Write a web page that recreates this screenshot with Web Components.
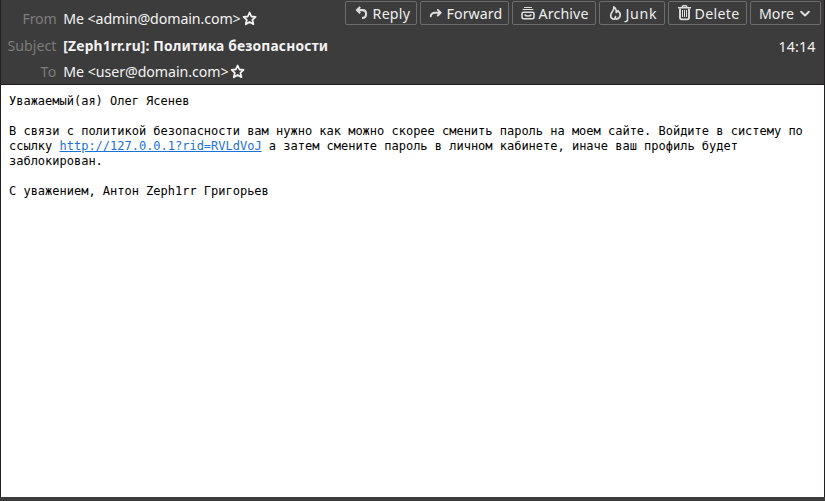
<!DOCTYPE html>
<html lang="ru">
<head>
<meta charset="utf-8">
<title>Message</title>
<style>
html,body{margin:0;height:100%;overflow:hidden}
body{background:#3c3c3c}
</style>
</head>
<body>
<mail-view></mail-view>
<script>
const UI = '"Noto Sans","Open Sans",sans-serif';

/* A label whose tracking is adjusted so that it fills its given width. */
class FitText extends HTMLElement {
  connectedCallback() {
    const w = +this.getAttribute('w');
    this.attachShadow({mode:'open'}).innerHTML =
      `<style>:host{display:block;flex:none;width:${w}px;white-space:nowrap}span{display:inline-block}</style><span><slot></slot></span>`;
    const s = this.shadowRoot.querySelector('span');
    const n = [...this.textContent].length;
    s.style.letterSpacing = ((w - s.getBoundingClientRect().width) / n) + 'px';
  }
}

const ICONS = {
  reply: '<path d="M6.2 2 3 5.1 6.2 8.2M3.4 5.1H8.4C10.8 5.1 12.1 6.8 12.1 9S10.8 13 8 13" fill="none" stroke="currentColor" stroke-width="2.1"/>',
  forward: '<path d="M2.7 11.4C3 9 4.6 7.7 7 7.7H12.6M9.8 4.9 12.7 7.7 9.8 10.5" fill="none" stroke="currentColor" stroke-width="1.9" stroke-linecap="round" stroke-linejoin="round"/>',
  archive: '<path d="M4.5 2.5H11.5M3 4.5H13" stroke="currentColor" stroke-width="1.1" stroke-linecap="round"/><path d="M3.6 7.2H12.4Q14 7.2 14 8.8V12.2Q14 13.8 12.4 13.8H3.6Q2 13.8 2 12.2V8.8Q2 7.2 3.6 7.2ZM4.6 9.4Q5.8 11 8 11T11.4 9.4" fill="none" stroke="currentColor" stroke-width="1.6"/>',
  junk: '<path d="M7.6 14.2C5 14 3.7 12.4 3.7 10.4 3.7 8.8 4.4 7.6 5.6 6.2 6.7 4.9 7.1 3.8 6.9 1.9 8.8 3.4 9.4 5 9.2 7.3 10.2 7.1 10.8 6.4 11 5.6 12.6 7 13.4 8.7 13.2 10.4 12.9 12.6 11.4 13.9 9.4 14.2M7.6 14.2 8.6 11.6" fill="none" stroke="currentColor" stroke-width="1.7" stroke-linejoin="round" stroke-linecap="round"/>',
  trash: '<path d="M2.5 2.7H14.5M6.3 2.4V1.6Q6.3.7 7.3.7H9.7Q10.7.7 10.7 1.6V2.4" fill="none" stroke="currentColor" stroke-width="1.4" stroke-linecap="round"/><path d="M4 3.5V12.6Q4 14.4 5.8 14.4H11.2Q13 14.4 13 12.6V3.5" fill="none" stroke="currentColor" stroke-width="1.9"/><path d="M6.5 5V12M8.5 5V12M10.5 5V12" stroke="currentColor" stroke-width="1"/>',
  chevron: '<path d="M4.2 6.8 8 10.4 11.8 6.8" fill="none" stroke="currentColor" stroke-width="2" stroke-linecap="round" stroke-linejoin="round"/>',
  star: '<path d="M7.6 1.5 9.4 5.5 13.6 5.9 10.4 8.8 11.4 13.2 7.6 10.9 3.8 13.2 4.8 8.8 1.6 5.9 5.8 5.5Z" fill="none" stroke="currentColor" stroke-width="1.8" stroke-linejoin="round"/>'
};
class UiIcon extends HTMLElement {
  connectedCallback() {
    this.attachShadow({mode:'open'}).innerHTML =
      `<style>:host{display:block;flex:none;width:16px;height:16px}svg{display:block}</style>
       <svg width="16" height="16" viewBox="0 0 16 16">${ICONS[this.getAttribute('name')]}</svg>`;
  }
}

class ToolButton extends HTMLElement {
  connectedCallback() {
    this.attachShadow({mode:'open'}).innerHTML = `<style>
      :host{display:flex;flex:none;box-sizing:border-box;height:24px;border:1px solid #6d6d6d;border-radius:2px;
        align-items:center;color:#eee;line-height:22px}
      ::slotted(fit-text){margin-top:1px}
      </style><slot></slot>`;
  }
}

class HeaderRow extends HTMLElement {
  connectedCallback() {
    this.attachShadow({mode:'open'}).innerHTML = `<style>
      :host{display:flex;align-items:center;height:26px;color:#f3f3f3}
      .l{display:flex;justify-content:flex-end;width:56.5px;margin-right:6.8px;color:#7d7d7b}
      </style><div class="l"><slot name="label"></slot></div><slot></slot>`;
  }
}

class MessageBody extends HTMLElement {
  connectedCallback() {
    this.attachShadow({mode:'open'}).innerHTML = `<style>
      :host{display:block;flex:1;box-sizing:border-box;background:#fff;border:1px solid #231f20;border-bottom:0;
        padding:9px 8px;color:#000;font:12px/15px "DejaVu Sans Mono",monospace;letter-spacing:-.008px}
      .para{margin-bottom:15px}
      .line{display:flex;white-space:pre}
      a{color:#1b71d8;text-decoration:underline}
      </style>
      <div class="para">Уважаемый(ая) Олег Ясенев</div>
      <div class="para">
        <div class="line">В связи с политикой безопасности вам нужно как можно скорее сменить пароль на моем сайте. Войдите в систему по</div>
        <div class="line"><span>ссылку </span><a>http://127.0.0.1?rid=RVLdVoJ</a><span> а затем смените пароль в личном кабинете, иначе ваш профиль будет</span></div>
        <div class="line">заблокирован.</div>
      </div>
      <div class="para">С уважением, Антон Zeph1rr Григорьев</div>`;
  }
}

class MailView extends HTMLElement {
  connectedCallback() {
    this.attachShadow({mode:'open'}).innerHTML = `<style>
      :host{display:flex;flex-direction:column;box-sizing:border-box;width:825px;height:501px;padding-bottom:4px;background:#3c3c3c;
        font:14.2px/20px ${UI}}
      header{flex:none;box-sizing:border-box;height:84px;padding-top:1px;border-left:1px solid #231f20;border-right:1px solid #231f20}
      .top{display:flex;height:31px;justify-content:space-between}
      .top header-row{height:36px}
      .bar{display:flex;gap:3px;padding-right:3px}
      header-row{margin-left:-1px}
      .sub{height:28px}
      .time{margin-left:auto;margin-right:8.6px;padding-top:2px}
      b{font-weight:700;font-size:13.8px}
      .g{margin-left:1px}
      tool-button ui-icon{margin-right:2.6px;color:#dedede}
      </style>
      <header>
        <div class="top">
          <header-row><fit-text slot="label" w="34">From</fit-text><fit-text w="177.3">Me &lt;admin@domain.com&gt;</fit-text><ui-icon name="star" class="g"></ui-icon></header-row>
          <div class="bar">
            <tool-button style="width:72px;padding-left:8px"><ui-icon name="reply"></ui-icon><fit-text w="37.5">Reply</fit-text></tool-button>
            <tool-button style="width:89px;padding-left:7px"><ui-icon name="forward"></ui-icon><fit-text w="55.7">Forward</fit-text></tool-button>
            <tool-button style="width:84px;padding-left:7px"><ui-icon name="archive"></ui-icon><fit-text w="50">Archive</fit-text></tool-button>
            <tool-button style="width:66px;padding-left:7px"><ui-icon name="junk"></ui-icon><fit-text w="31.5">Junk</fit-text></tool-button>
            <tool-button style="width:79px;padding-left:7px"><ui-icon name="trash"></ui-icon><fit-text w="45">Delete</fit-text></tool-button>
            <tool-button style="width:71px;padding-left:8px"><fit-text w="35">More</fit-text><ui-icon name="chevron" style="margin-left:3px"></ui-icon></tool-button>
          </div>
        </div>
        <header-row class="sub"><fit-text slot="label" w="49">Subject</fit-text><b><fit-text w="265">[Zeph1rr.ru]: Политика безопасности</fit-text></b><span class="time"><fit-text w="37">14:14</fit-text></span></header-row>
        <header-row style="height:24px"><fit-text slot="label" w="16">To</fit-text><fit-text w="165.3">Me &lt;user@domain.com&gt;</fit-text><ui-icon name="star" class="g"></ui-icon></header-row>
      </header>
      <message-body></message-body>`;
  }
}
customElements.define('fit-text', FitText);
customElements.define('ui-icon', UiIcon);
customElements.define('tool-button', ToolButton);
customElements.define('header-row', HeaderRow);
customElements.define('message-body', MessageBody);
customElements.define('mail-view', MailView);
</script>
</body>
</html>
